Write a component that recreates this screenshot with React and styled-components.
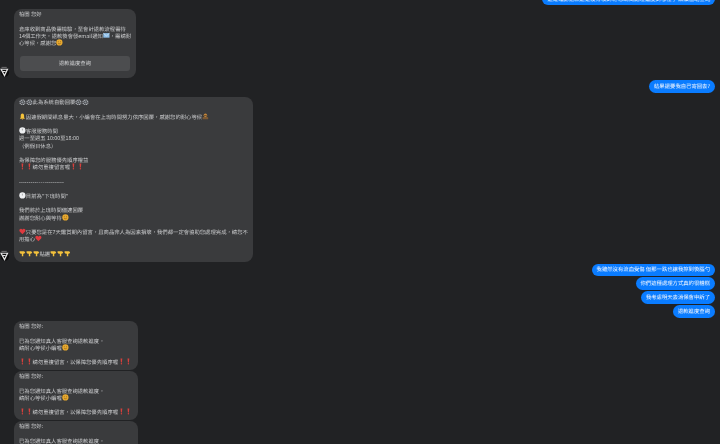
import React from "react";
import styled, { createGlobalStyle } from "styled-components";

const GlobalStyle = createGlobalStyle`
  html, body {
    margin: 0;
    padding: 0;
    background-color: #212224;
  }
`;

const Emoji = ({ kind }) => {
  if (kind === "gear") {
    return (
      <EmojiBox viewBox="0 0 12 12">
        <circle cx="6" cy="6" r="4.2" fill="none" stroke="#a9adb3" strokeWidth="2.4" strokeDasharray="2 1" />
        <circle cx="6" cy="6" r="2" fill="#8b9097" />
      </EmojiBox>
    );
  }
  if (kind === "bell") {
    return (
      <EmojiBox viewBox="0 0 12 12">
        <path d="M6 1C3.8 1 3 3 3 5v3L1.5 10h9L9 8V5c0-2-.8-4-3-4z" fill="#f5c33b" />
        <circle cx="6" cy="10.6" r="1.1" fill="#d9962a" />
      </EmojiBox>
    );
  }
  if (kind === "bow") {
    return (
      <EmojiBox viewBox="0 0 12 12">
        <circle cx="6" cy="4" r="3" fill="#c98a3c" />
        <rect x="1" y="7" width="10" height="4" rx="1.5" fill="#7d5a34" />
        <rect x="3.5" y="3.5" width="5" height="1" fill="#3a2a1a" />
      </EmojiBox>
    );
  }
  if (kind === "clock") {
    return (
      <EmojiBox viewBox="0 0 12 12">
        <circle cx="6" cy="6" r="5.5" fill="#eef0f2" />
        <path d="M6 3v3.2" stroke="#777" strokeWidth="1" />
      </EmojiBox>
    );
  }
  if (kind === "bang") {
    return (
      <EmojiBox viewBox="0 0 12 12">
        <path d="M4.4 1h3.2L6.8 8H5.2z" fill="#d8403c" />
        <circle cx="6" cy="10" r="1.3" fill="#d8403c" />
      </EmojiBox>
    );
  }
  if (kind === "smile") {
    return (
      <EmojiBox viewBox="0 0 12 12">
        <circle cx="6" cy="6" r="5.5" fill="#e8a92e" />
        <circle cx="4" cy="5" r="0.8" fill="#5b3a12" />
        <circle cx="8" cy="5" r="0.8" fill="#5b3a12" />
        <path d="M3.6 7.4c1.2 1.4 3.6 1.4 4.8 0" stroke="#5b3a12" strokeWidth="0.8" fill="none" />
      </EmojiBox>
    );
  }
  if (kind === "heart") {
    return (
      <EmojiBox viewBox="0 0 12 12">
        <path d="M6 11L1.2 6C-.2 4 1 1.4 3.4 1.4 4.6 1.4 5.5 2 6 3c.5-1 1.4-1.6 2.6-1.6C11 1.4 12.2 4 10.8 6z" fill="#dd3a3f" />
      </EmojiBox>
    );
  }
  if (kind === "point") {
    return (
      <EmojiBox viewBox="0 0 12 12">
        <path d="M1 2h8l2 2.5-2 2H7.5V11H5V6.5H3L1 5z" fill="#f4c23c" />
      </EmojiBox>
    );
  }
  return (
    <EmojiBox viewBox="0 0 12 12">
      <rect x="0.5" y="2" width="11" height="8" fill="#8fc0ea" />
      <path d="M.5 2L6 7l5.5-5" stroke="#eef6fc" strokeWidth="1" fill="none" />
    </EmojiBox>
  );
};

const Repeat = ({ kind, count }) => (
  <>
    {Array.from({ length: count }).map((_, i) => (
      <Emoji key={i} kind={kind} />
    ))}
  </>
);

const Avatar = () => (
  <AvatarCircle>
    <svg viewBox="0 0 12 14" width="9" height="11">
      <circle cx="6.5" cy="8.5" r="5.5" fill="#0b0b0c" />
      <path d="M2 1.5h7" stroke="#8a8a8a" strokeWidth="1" />
      <path d="M1.5 4h8.5L6 12.5z" fill="none" stroke="#e6e6e6" strokeWidth="1.6" />
      <path d="M3.5 7h4" stroke="#e6e6e6" strokeWidth="1.3" />
    </svg>
  </AvatarCircle>
);

const SupportCard = ({ top }) => (
  <Row $top={top}>
    <AvatarSlot />
    <ShortBubble>
      柏圜 您好:
      <br />
      <br />
      已為您通知真人客服查詢退款進度&#65292;
      <br />
      請耐心等候小編喔
      <Emoji kind="smile" />
      <br />
      <br />
      <Repeat kind="bang" count={2} />
      請勿重複留言&#65292;以保障您優先順序喔
      <Repeat kind="bang" count={2} />
    </ShortBubble>
  </Row>
);

const App = () => {
  return (
    <Page>
      <GlobalStyle />
      <Thread>
        <SentRow>
          <SentBubble>這邊確認退款還是沒有收到呢 想請問處理進度到哪裡了 麻煩協助查詢</SentBubble>
        </SentRow>

        <Row $top={3.5}>
          <AvatarSlot>
            <Avatar />
          </AvatarSlot>
          <RefundBubble>
            柏圜 您好
            <br />
            <br />
            倉庫收到商品後需檢驗&#65292;至會計退款流程需待
            <br />
            14個工作天&#65292;退款後會發email通知
            <Emoji kind="mail" />
            &#65292;需請耐
            <br />
            心等候&#65292;感謝您
            <Emoji kind="smile" />
            <RefundButton>退款進度查詢</RefundButton>
          </RefundBubble>
        </Row>

        <SentRow $top={2}>
          <SentBubble>結果還要我自己寄回去?</SentBubble>
        </SentRow>

        <Row $top={4}>
          <AvatarSlot>
            <Avatar />
          </AvatarSlot>
          <AutoBubble>
            <Repeat kind="gear" count={2} />
            此為系統自動回覆
            <Repeat kind="gear" count={2} />
            <br />
            <br />
            <Emoji kind="bell" />
            因連假期間訊息量大&#65292;小編會在上班時間努力依序回覆&#65292;感謝您的耐心等候
            <Emoji kind="bow" />
            <br />
            <br />
            <Emoji kind="clock" />
            客服服務時間
            <br />
            週一至週五 10:00至18:00
            <br />
            &#65288;例假日休息&#65289;
            <br />
            <br />
            為保障您的服務優先順序權益
            <br />
            <Repeat kind="bang" count={2} />
            請勿重複留言喔
            <Repeat kind="bang" count={2} />
            <br />
            <br />
            <Dashes>-----------------------</Dashes>
            <br />
            <br />
            <Emoji kind="clock" />
            目前為"下班時間"
            <br />
            <br />
            我們將於上班時間儘速回覆
            <br />
            謝謝您耐心與等待
            <Emoji kind="smile" />
            <br />
            <br />
            <Emoji kind="heart" />
            只要您是在7天鑑賞期內留言&#65292;且商品非人為因素損壞&#65292;我們都一定會協助您處理完成&#65292;請您不
            <br />
            用擔心
            <Emoji kind="heart" />
            <br />
            <br />
            <Repeat kind="point" count={3} />
            點選
            <Repeat kind="point" count={3} />
          </AutoBubble>
        </Row>

        <SentRow $top={1.5}>
          <SentBubble>我雖然沒有流血受傷 但那一跌也讓我擦到後腦勺</SentBubble>
        </SentRow>
        <SentRow $top={1}>
          <SentBubble>你們這種處理方式真的很糟糕</SentBubble>
        </SentRow>
        <SentRow $top={1.5}>
          <SentBubble>我考慮明天去消保會申訴了</SentBubble>
        </SentRow>
        <SentRow $top={1.5}>
          <SentBubble>退款進度查詢</SentBubble>
        </SentRow>

        <SupportCard top={3} />
        <SupportCard top={1} />
        <SupportCard top={1} />
      </Thread>
    </Page>
  );
};

const Page = styled.div`
  width: 720px;
  height: 444px;
  overflow: hidden;
  background-color: #212224;
  font-family: "Noto Sans CJK TC", "Noto Sans", sans-serif;
  font-size: 5.35px;
  line-height: 7.2px;
  text-rendering: geometricPrecision;
`;

const Thread = styled.div`
  display: flex;
  flex-direction: column;
  margin-top: -7px;
  filter: blur(0.25px);
`;

const Row = styled.div`
  display: flex;
  align-items: flex-end;
  gap: 5px;
  margin-top: ${(p) => p.$top || 0}px;
`;

const SentRow = styled.div`
  display: flex;
  justify-content: flex-end;
  padding-right: 5px;
  margin-top: ${(p) => p.$top || 0}px;
`;

const AvatarSlot = styled.div`
  width: 9px;
  flex: none;
`;

const AvatarCircle = styled.div`
  display: flex;
  height: 11px;
  margin-bottom: 1px;
`;

const SentBubble = styled.div`
  background-color: #0a7cff;
  color: #f4f8ff;
  padding: 2.6px 5px 2.7px;
  border-radius: 6.5px;
  white-space: nowrap;
`;

const ReceivedBubble = styled.div`
  background-color: #3a3b3d;
  color: #c9cacc;
  box-sizing: border-box;
  border-radius: 8px;
  white-space: nowrap;
`;

const RefundBubble = styled(ReceivedBubble)`
  width: 122px;
  padding: 2.4px 6px 7px 5px;
`;

const RefundButton = styled.div`
  height: 15px;
  margin-top: 9px;
  margin-left: 1px;
  display: flex;
  align-items: center;
  justify-content: center;
  background-color: #4c4d4f;
  color: #cfd0d2;
  border-radius: 3px;
`;

const AutoBubble = styled(ReceivedBubble)`
  width: 239px;
  padding: 2.5px 4px 4.4px 5px;
`;

const ShortBubble = styled(ReceivedBubble)`
  width: 124px;
  height: 49px;
  flex: none;
  padding: 2.5px 5px 3.5px;
`;

const Dashes = styled.span`
  letter-spacing: 0.1px;
`;

const EmojiBox = styled.svg`
  width: 6.8px;
  height: 6.8px;
  margin: -2px 0;
  vertical-align: 1px;
`;

export default App;
